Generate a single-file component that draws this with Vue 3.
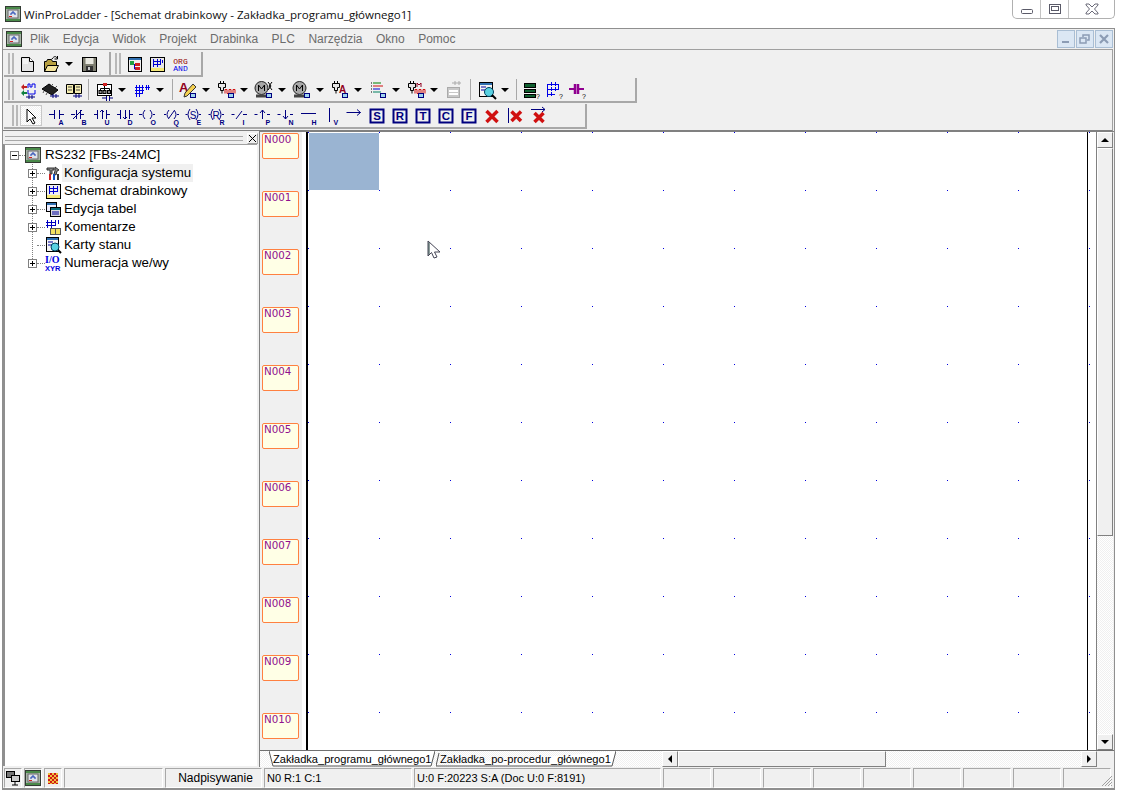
<template>
  <div class="window">
    <div class="titlebar">
      <svg class="title-icon" width="16" height="16" viewBox="0 0 16 16" v-html="plcIcon"></svg>
      <span class="title-text">WinProLadder - [Schemat drabinkowy - Zakładka_programu_głównego1]</span>
      <div class="caption-btns">
        <div class="cap-btn cap-min"><svg width="14" height="7" viewBox="0 0 14 7"><rect x="1.500" y="1.500" width="11" height="4" rx="1" fill="#fff" stroke="#5a5a68"/></svg></div>
        <div class="cap-btn cap-max"><svg width="14" height="12" viewBox="0 0 14 12"><rect x="1.500" y="1.500" width="11" height="9" fill="#fff" stroke="#5a5a68"/><rect x="3.500" y="3.500" width="7" height="4" fill="#fff" stroke="#5a5a68"/></svg></div>
        <div class="cap-btn cap-close"><svg width="14" height="12" viewBox="0 0 14 12"><path d="M1 1h3l3 3 3-3h3v1L9.500 6 13 10v1h-3L7 8l-3 3H1v-1l3.500-4L1 2z" fill="#fff" stroke="#6a6a78"/></svg></div>
      </div>
    </div>

    <div class="frame">
      <div class="menubar">
        <svg class="menu-icon" width="16" height="16" viewBox="0 0 16 16" v-html="plcIcon"></svg>
        <span v-for="m in menus" :key="m" class="menu-item">{{ m }}</span>
        <div class="mdi-btns">
          <div class="mdi-btn"><svg width="12" height="12" viewBox="0 0 12 12"><rect x="2" y="8" width="7" height="2" fill="#8c9cb4"/></svg></div>
          <div class="mdi-btn"><svg width="12" height="12" viewBox="0 0 12 12" fill="none" stroke="#8c9cb4" stroke-width="1.500"><rect x="1" y="5" width="6" height="5"/><path d="M4 4V2h6v5H8"/></svg></div>
          <div class="mdi-btn"><svg width="12" height="12" viewBox="0 0 12 12" stroke="#8c9cb4" stroke-width="2.200"><path d="M2 2l8 8M10 2l-8 8"/></svg></div>
        </div>
      </div>

      <div class="toolbars">
        <div class="tool-row">
          <div class="band band-file">
            <span class="grip"></span>
            <template v-for="(t, i) in fileTools" :key="i">
              <span v-if="t === 'drop'" class="drop drop-wide"></span>
              <svg v-else class="tool" width="23" height="22" viewBox="0 0 23 22" v-html="t"></svg>
            </template>
          </div>
          <div class="band band-view">
            <span class="grip"></span>
            <svg v-for="(t, i) in viewTools" :key="i" class="tool" width="23" height="22" viewBox="0 0 23 22" v-html="t"></svg>
          </div>
        </div>
        <div class="tool-row">
          <div class="band band-main">
            <span class="grip grip-main"></span>
            <template v-for="(t, i) in mainTools" :key="i">
              <span v-if="t === 'drop'" class="drop"></span>
              <span v-else-if="t.sep" class="sep" :style="{ width: t.sep + 'px' }"></span>
              <svg v-else class="tool" width="23" height="22" viewBox="0 0 23 22" v-html="t"></svg>
            </template>
          </div>
        </div>
        <div class="tool-row">
          <div class="band band-ladder">
            <span class="grip grip-ladder"></span>
            <div class="arrow-btn">
              <svg width="20" height="20" viewBox="0 0 20 20"><path d="M6 3v13l3-3 3 5 2-1-3-5h4z" fill="#fff" stroke="#000"/></svg>
            </div>
            <svg v-for="(t, i) in ladderTools" :key="i" class="tool" width="23" height="22" viewBox="0 0 23 22" v-html="t"></svg>
          </div>
        </div>
      </div>

      <div class="workspace">
        <div class="side-panel">
          <div class="side-head">
            <span class="side-grip"></span>
            <span class="side-close"><svg width="9" height="9" viewBox="0 0 9 9" stroke="#000"><path d="M1 1l7 7M8 1l-7 7"/></svg></span>
          </div>
          <div class="tree">
            <div class="tree-line"></div>
            <div class="tree-root">
              <span class="expander"><i class="h"></i></span>
              <span class="dots dots-root"></span>
              <svg class="tree-icon" width="16" height="16" viewBox="0 0 16 16" v-html="plcIcon"></svg>
              <span class="tree-label">RS232 [FBs-24MC]</span>
            </div>
            <div v-for="n in treeItems" :key="n.label" class="tree-row">
              <span v-if="n.plus" class="expander"><i class="h"></i><i class="v"></i></span>
              <span v-else class="expander-none"></span>
              <span class="dots"></span>
              <svg class="tree-icon" width="17" height="17" viewBox="0 0 17 17" v-html="n.icon"></svg>
              <span class="tree-label" :class="{ active: n.active }">{{ n.label }}</span>
            </div>
          </div>
        </div>

        <div class="editor">
          <div class="editor-main">
            <div class="gutter">
              <div v-for="r in rungs" :key="r" class="rung">{{ r }}</div>
            </div>
            <div class="canvas">
              <svg class="grid-dots" width="790" height="620">
                <rect x="1" y="1" width="70" height="57" fill="#9ab4d2"/>
                <template v-for="y in 11" :key="y">
                  <rect v-for="x in 12" :key="x" :x="(x - 1) * 71" :y="(y - 1) * 58" width="1" height="1" fill="#0000e0"/>
                </template>
              </svg>
              <svg class="cursor" width="15" height="21" viewBox="0 0 15 21"><path d="M1 1v15l3.500-3.500L7 18l3-1-2.500-5H13z" fill="#fff" stroke="#445"/><path d="M1.500 2v13l1-1V3z" fill="#1d3b38"/></svg>
            </div>
            <div class="vscroll">
              <div class="sb-btn"><i class="tri tri-up"></i></div>
              <div class="vthumb"></div>
              <div class="vtrack"></div>
              <div class="sb-btn"><i class="tri tri-down"></i></div>
            </div>
          </div>
          <div class="editor-foot">
            <div class="tabs">
              <div class="tab tab-one">
                <svg class="tab-shape" width="166" height="16" viewBox="0 0 166 16"><path d="M0 0l4 15h158l4-15" fill="#fff" stroke="#555"/></svg>
                <span>Zakładka_programu_głównego1</span>
              </div>
              <div class="tab tab-two">
                <svg class="tab-shape" width="180" height="16" viewBox="0 0 180 16"><path d="M0 15h176l4-15M0 15L3 2" fill="#fff" stroke="#555"/></svg>
                <span>Zakładka_po-procedur_głównego1</span>
              </div>
            </div>
            <div class="hscroll">
              <div class="sb-btn"><i class="tri tri-left"></i></div>
              <div class="hthumb"></div>
              <div class="htrack"></div>
              <div class="sb-btn"><i class="tri tri-right"></i></div>
            </div>
            <div class="corner"></div>
          </div>
        </div>
      </div>

      <div class="statusbar">
        <div class="st st-icon"><svg width="16" height="16" viewBox="0 0 16 16"><rect x="1.500" y="1.500" width="8" height="6" fill="#777" stroke="#000"/><rect x="6.500" y="5.500" width="8" height="6" fill="#ccc" stroke="#000"/><path d="M10 12v3M7 15h6" stroke="#000"/></svg></div>
        <div class="st st-icon"><svg width="16" height="16" viewBox="0 0 16 16" v-html="plcIcon"></svg></div>
        <div class="st st-icon"><span class="led"></span></div>
        <div class="st st-empty"></div>
        <div class="st st-mode">Nadpisywanie</div>
        <div class="st st-pos">N0 R:1 C:1</div>
        <div class="st st-mem">U:0 F:20223 S:A (Doc U:0 F:8191)</div>
        <div v-for="n in 9" :key="n" class="st st-blank"></div>
        <svg class="resize" width="12" height="12" viewBox="0 0 12 12" stroke="#a0a0a0"><path d="M11 1L1 11M11 4l-7 7M11 7l-4 4M11 10l-1 1"/></svg>
      </div>
    </div>
  </div>
</template>

<script setup>
const menus = ['Plik', 'Edycja', 'Widok', 'Projekt', 'Drabinka', 'PLC', 'Narzędzia', 'Okno', 'Pomoc']
const rungs = ['N000', 'N001', 'N002', 'N003', 'N004', 'N005', 'N006', 'N007', 'N008', 'N009', 'N010']

const plcIcon = `
  <rect x="0.500" y="0.500" width="15" height="15" fill="#a8b4a8" stroke="#333b33"/>
  <rect x="1" y="1" width="14" height="2" fill="#4a8a4a"/>
  <rect x="1" y="13" width="14" height="2" fill="#4a8a4a"/>
  <rect x="3" y="4" width="10" height="8" fill="#dfe3ea" stroke="#666"/>
  <path d="M5 8h2V6h2v2h2" fill="none" stroke="#1a3fb0"/>
  <rect x="4" y="10" width="3" height="1" fill="#d02020"/>`

const NAVY = '#00007f'
const BLUE = '#0000e8'
const marker = '<rect x="14.500" y="14.500" width="5" height="4" fill="#9fd4ee" stroke="#00007f"/>'
const joint = '<path d="M12 17h9M15 15v4M18 15v4" stroke="#00007f" fill="none"/>'
const label = (c, x = 14.5) => `<text x="${x}" y="20" font-family="Liberation Sans, sans-serif" font-size="7" font-weight="700" fill="${NAVY}">${c}</text>`
const lines = (d, extra = '') => `<path d="${d}" fill="none" stroke="${NAVY}" shape-rendering="crispEdges"/>${extra}`
const curved = (d, extra = '') => `<path d="${d}" fill="none" stroke="${NAVY}"/>${extra}`
const boxed = (c) => `<rect x="4.500" y="4.500" width="13" height="13" fill="none" stroke="${NAVY}" stroke-width="2"/><text x="11" y="15" text-anchor="middle" font-family="Liberation Sans, sans-serif" font-size="11.500" font-weight="700" fill="${NAVY}">${c}</text>`
const plug = '<path d="M4.500 4.500h7v4h-2v3h-3v-3h-2z" fill="#e6e6e6" stroke="#000"/><path d="M6.500 2v2M9.500 2v2M8 11.500v3" stroke="#000" fill="none"/>'
const wave = '<path d="M11 14.500v-4h2v4h2v-4h2v4h2v-4h2v4" stroke="#d01010" fill="none"/>'
const gauge = '<circle cx="9.500" cy="9" r="6.500" fill="#a8a8a8" stroke="#222"/><path d="M6.500 12V6l3 4 3-4v6" fill="none" stroke="#000"/><path d="M4 17h11" stroke="#444" stroke-width="3"/>'
const redX = '<path d="M5.500 6l11 11M16.500 6l-11 11" stroke="#d01010" stroke-width="3.500" fill="none"/>'

const fileTools = [
  '<path d="M5.500 4.500h8l4 4v10h-12z" fill="#e4e4e4" stroke="#000"/><path d="M13.500 4.500v4h4" fill="#fff" stroke="#000"/><path d="M7 6h5v5H7z" fill="#fff" opacity=".6"/>',
  '<path d="M5.500 18.500v-10h2l1-2h4l1 2h4v10z" fill="#b8a040" stroke="#000"/><path d="M5.500 18.500l3-6h11l-3 6z" fill="#f4e49c" stroke="#000"/><path d="M13 6c2-3 4-3 5-1M18.500 3v3h-3" fill="none" stroke="#000"/>',
  'drop',
  '<rect x="4.500" y="4.500" width="14" height="14" fill="#7e7e70" stroke="#000"/><rect x="7.500" y="5" width="8" height="6" fill="#e8e8e0"/><rect x="8" y="13" width="7" height="5" fill="#333"/><rect x="10" y="14" width="2" height="3" fill="#ccc"/>'
]

const viewTools = [
  '<rect x="5.500" y="4.500" width="13" height="14" fill="#f0f0f0" stroke="#000"/><rect x="6" y="5" width="12" height="2" fill="#2f6fb0"/><rect x="7" y="8" width="4" height="4" fill="#20a040"/><rect x="12" y="10" width="5" height="3" fill="#d02020"/><rect x="12" y="14" width="5" height="3" fill="#d02020"/><path d="M11.500 11v5h1" stroke="#0000c0" fill="none"/>',
  '<rect x="4.500" y="4.500" width="14" height="14" fill="#e8e8e8" stroke="#000"/><rect x="5" y="15" width="13" height="3" fill="#f4e878"/><path d="M7.500 6v8M11.500 6v8M14.500 6v5M7 8h8M7 11h8M16.500 7v3" stroke="#0000d0" fill="none" shape-rendering="crispEdges"/>',
  `<text x="11.500" y="10.500" text-anchor="middle" font-family="Liberation Mono, monospace" font-size="8" fill="#900000">ORG</text><text x="11.500" y="18" text-anchor="middle" font-family="Liberation Mono, monospace" font-size="8" fill="${BLUE}">AND</text>`
]

const mainTools = [
  `<path d="M6 8l3-3v2h3v2H9v2z" fill="#c02020"/><path d="M6 14l3-3v2h3v2H9v2z" fill="#108040"/><path d="M13 9V5h2v3h2V5h3v4M13 11v4h7v-4" stroke="${BLUE}" fill="none"/><path d="M11 18h9M14 16v4M17 16v4" stroke="${NAVY}" fill="none"/>`,
  `<path d="M4 10l7-5 9 6-6 5z" fill="#222" stroke="#000"/><path d="M6 12l-1 2M9 14l-1 2M13 7l2-2M17 9l2-2" stroke="#555"/>${joint}`,
  `<path d="M5.500 5.500h7v9h-7zM13.500 5.500h7v9h-7z" fill="#f6eeb0" stroke="#000"/><path d="M7 8h4M7 11h4M15 8h4M15 11h4" stroke="#444"/>${joint}`,
  { sep: 8 },
  `<rect x="5.500" y="5.500" width="14" height="11" fill="#fff" stroke="#000"/><rect x="11" y="4" width="4" height="3" fill="#d02020"/><path d="M12.500 7v2M8.500 9.500h9M8.500 9.500v2M12.500 9.500v2M17.500 9.500v2" stroke="#000" fill="none"/><rect x="7" y="11.500" width="3" height="3" fill="#888" stroke="#000"/><rect x="11" y="11.500" width="3" height="3" fill="#888" stroke="#000"/><rect x="15.500" y="11.500" width="3" height="3" fill="#888" stroke="#000"/><path d="M10 19h4M17 19h4M14.500 17v5M17.500 17v5" stroke="${NAVY}" fill="none"/>`,
  'drop',
  `<path d="M6.500 6v12M9.500 6v12M12.500 6v9M16.500 6v5M18.500 6v5M5 8h9M5 11h9M5 14h8M15 8h5" stroke="${BLUE}" fill="none" shape-rendering="crispEdges"/>`,
  'drop',
  { sep: 8 },
  `<text x="3" y="13" font-family="Liberation Sans, sans-serif" font-size="13" font-weight="700" fill="#900020">A</text><path d="M8 18l1-4 8-9 3 3-9 9z" fill="#f4d050" stroke="#333"/>${marker}`,
  'drop',
  `${plug}${wave}${marker}`,
  'drop',
  `${gauge}<path d="M16 3l3 4-3 4M20 3l-3 4 3 4" stroke="#000" fill="none"/>${marker}`,
  'drop',
  `${gauge}${marker}`,
  'drop',
  `${plug}<text x="11" y="14" font-family="Liberation Sans, sans-serif" font-size="10" font-weight="700" fill="#900020">A</text>${marker}`,
  'drop',
  `<path d="M5 4h1M5 7h1M5 10h1M5 13h1" stroke="#000"/><path d="M7 4h8" stroke="#008000"/><path d="M7 7h10" stroke="#d01010"/><path d="M7 10h7" stroke="#0000d0"/><path d="M7 13h8" stroke="#008060"/>${marker}`,
  'drop',
  `${plug}${wave}<path d="M13 8V4l2 2 2-2v4" stroke="#900020" fill="none"/>${marker}`,
  'drop',
  '<rect x="5.500" y="8.500" width="12" height="10" fill="#c8c8c8" stroke="#aaa"/><path d="M7 12h9M7 15h9" stroke="#fff" stroke-width="2"/><path d="M10 4h9M13 2v4M17 2v4" stroke="#aaa" fill="none"/>',
  { sep: 10 },
  `<rect x="4.500" y="3.500" width="13" height="14" fill="#f4f4f4" stroke="#000"/><rect x="5" y="4" width="12" height="2" fill="#2f6fb0"/><path d="M6 8h5M6 11h4" stroke="#0000a0"/><circle cx="14" cy="13" r="4.500" fill="#58d0e0" stroke="#004060"/><path d="M17 16l4 4" stroke="#000" stroke-width="2"/>`,
  'drop',
  { sep: 6 },
  `<rect x="5.500" y="4.500" width="11" height="4" fill="#0f5f2f" stroke="#000"/><rect x="5.500" y="10.500" width="11" height="3" fill="#0f5f2f" stroke="#000"/><rect x="5.500" y="15.500" width="11" height="3" fill="#0f5f2f" stroke="#000"/><text x="17" y="20" font-family="Liberation Sans, sans-serif" font-size="7" fill="#000">?</text>`,
  `<path d="M5.500 5v13M5.500 5h11M5.500 10h11M5.500 15h7M16.500 5v5M9.500 3v4M13.500 3v4M9.500 8v4M13.500 8v4M9.500 13v4" stroke="${BLUE}" fill="none" shape-rendering="crispEdges"/><text x="17" y="20" font-family="Liberation Sans, sans-serif" font-size="7" fill="#000">?</text>`,
  '<path d="M4 10h5M14 10h5" stroke="#900090" stroke-width="2"/><path d="M10 5v10M13 5v10" stroke="#900090" stroke-width="2.500"/><text x="17" y="20" font-family="Liberation Sans, sans-serif" font-size="7" fill="#000">?</text>'
]

const ladderTools = [
  lines('M5 9.500h5M10 5v9M15 5v9M15 9.500h5', label('A')),
  curved('M4 9.500h4M14 9.500h3M6 14l9-9M9.500 5v9M13.500 5v9', label('B')),
  lines('M4 9.500h3M7.500 5v9M16.500 5v9M16.500 9.500h3M12 5v9', curved('M10 7l2-2 2 2', label('U'))),
  lines('M4 9.500h3M7.500 5v9M16.500 5v9M16.500 9.500h3M12 5v9', curved('M10 12l2 2 2-2', label('D'))),
  curved('M3 9.500h3M9 5Q5 9.500 9 14M14 5Q18 9.500 14 14M17 9.500h2', label('O')),
  curved('M5 9.500h2M10 5Q6 9.500 10 14M15 5Q19 9.500 15 14M18 9.500h2M10 13l5-7', label('Q')),
  curved('M3.500 9.500h2M8 4Q4 9.500 8 15M14 4Q18 9.500 14 15M17 9.500h2', `<text x="11" y="13.500" text-anchor="middle" font-family="Liberation Sans, sans-serif" font-size="10" fill="${NAVY}">S</text>${label('E')}`),
  curved('M3.500 9.500h2M8 4Q4 9.500 8 15M14 4Q18 9.500 14 15M17 9.500h2', `<text x="11" y="13.500" text-anchor="middle" font-family="Liberation Sans, sans-serif" font-size="10" fill="${NAVY}">R</text>${label('R')}`),
  curved('M3.500 9.500h3M8 14l6-8M15 9.500h4', label('I')),
  curved('M3.500 9.500h3M11.500 14V5M9 8l2.500-3 2.500 3M16 9.500h3', label('P')),
  curved('M3.500 9.500h3M11.500 5v9M9 11l2.500 3 2.500-3M16 9.500h3', label('N')),
  lines('M3.500 8.500h15', label('H')),
  lines('M9.500 3v14', label('V', 13.5)),
  curved('M3.500 7.500h14M14 4.500l3.500 3-3.500 3'),
  boxed('S'), boxed('R'), boxed('T'), boxed('C'), boxed('F'),
  redX,
  `<path d="M4.500 3v15" stroke="${NAVY}"/><path d="M7.500 6.500l9.500 9.500M17 6.500L7.500 16" stroke="#d01010" stroke-width="3.500" fill="none"/>`,
  `<path d="M4 4.500h14M15 2l3 2.500-3 2.500" stroke="${NAVY}" fill="none"/><path d="M7.500 8l9 9M16.500 8l-9 9" stroke="#d01010" stroke-width="3.500" fill="none"/>`
]

const treeItems = [
  { label: 'Konfiguracja systemu', plus: true, active: true, icon: '<path d="M2 3h7v2H7v4H5V5H2zM10 2l4 3-2 1-1 4-2-1 1-3z" fill="#888" stroke="#333"/><path d="M5 9v6" stroke="#d02020" stroke-width="2"/><path d="M9 9v6" stroke="#1050c0" stroke-width="2"/><path d="M13 9v6" stroke="#333" stroke-width="2"/>' },
  { label: 'Schemat drabinkowy', plus: true, icon: '<rect x="1.500" y="1.500" width="14" height="14" fill="#eee" stroke="#000"/><rect x="2" y="12" width="13" height="3" fill="#f4e878"/><path d="M4.500 3v8M8.500 3v8M12.500 3v5M4 5.500h9M4 8.500h9" stroke="#0000d0" fill="none"/>' },
  { label: 'Edycja tabel', plus: true, icon: '<rect x="1.500" y="1.500" width="10" height="9" fill="#eef" stroke="#000"/><rect x="2" y="2" width="9" height="2" fill="#2f6fb0"/><rect x="5.500" y="6.500" width="10" height="9" fill="#ddd" stroke="#000"/><rect x="6" y="7" width="9" height="2" fill="#0a6a7a"/><path d="M7 11h7M7 13h7" stroke="#0000a0"/>' },
  { label: 'Komentarze', plus: true, icon: '<path d="M2.500 1v8M6.500 1v8M10.500 1v5M1 3.500h10M1 6.500h10M13.500 1v4" stroke="#0000c0" fill="none"/><rect x="5.500" y="9.500" width="5" height="6" fill="#f4e060" stroke="#555"/><rect x="10.500" y="9.500" width="5" height="6" fill="#f4e060" stroke="#555"/>' },
  { label: 'Karty stanu', plus: false, icon: '<rect x="1.500" y="0.500" width="12" height="14" fill="#f4f4f4" stroke="#000"/><rect x="2" y="1" width="11" height="2" fill="#2f6fb0"/><path d="M3 5h5M3 8h4" stroke="#0000a0"/><circle cx="10" cy="10" r="4" fill="#58d0e0" stroke="#004060"/><path d="M13 13l3 3" stroke="#000" stroke-width="2"/>' },
  { label: 'Numeracja we/wy', plus: true, icon: `<text x="0" y="8" font-family="Liberation Serif, serif" font-size="10" font-weight="700" fill="#0000e0">I/O</text><text x="0" y="16" font-family="Liberation Sans, sans-serif" font-size="7.500" font-weight="700" fill="#0000e0">XYR</text>` }
]
</script>

<style>
html,
body {
  margin: 0;
  background: #fff;
  overflow: hidden;
}
</style>

<style scoped>
.window {
  width: 1121px;
  height: 793px;
  background: #fff;
  font-family: "Liberation Sans", Arial, sans-serif;
  font-size: 12px;
  color: #000;
  overflow: hidden;
}

.titlebar {
  height: 28px;
  display: flex;
  align-items: center;
  padding-left: 5px;
  position: relative;
}

.title-icon {
  margin-right: 3px;
}

.title-text {
  font-family: "Open Sans", sans-serif;
  font-size: 11.55px;
  color: #111;
}

.caption-btns {
  position: absolute;
  left: 1012px;
  top: 0;
  width: 103px;
  height: 19px;
  display: flex;
  box-sizing: border-box;
  border: 1px solid #b0b0b0;
  border-top: none;
  border-radius: 0 0 5px 5px;
}

.cap-btn {
  display: flex;
  align-items: center;
  justify-content: center;
  border-left: 1px solid #c4c4c4;
}

.cap-min {
  width: 27px;
  border-left: none;
  padding-top: 4px;
  box-sizing: border-box;
}

.cap-max {
  width: 27px;
}

.cap-close {
  flex: 1;
}

.frame {
  height: 762px;
  margin: 0 6px 0 2px;
  box-sizing: border-box;
  border: 1px solid #8f8f8f;
  border-bottom-width: 2px;
  background: #f0f0f0;
  display: flex;
  flex-direction: column;
}

.menubar {
  height: 20px;
  flex: none;
  box-sizing: border-box;
  display: flex;
  align-items: center;
  padding: 0 0 1px 3px;
  font-size: 12px;
  color: #6c6c6c;
}

.menu-icon {
  margin-right: 8px;
}

.menu-item {
  margin-right: 13.5px;
}

.mdi-btns {
  margin-left: auto;
  margin-right: 1px;
  display: flex;
  gap: 1px;
}

.mdi-btn {
  width: 18px;
  height: 18px;
  box-sizing: border-box;
  border: 1px solid #a9bed4;
  background: #dbe7f4;
  display: flex;
  align-items: center;
  justify-content: center;
}

.toolbars {
  flex: none;
  height: 82px;
  margin-right: 1px;
  padding: 2px 0 0 1px;
  box-sizing: border-box;
  border: 1px solid #a0a0a0;
  border-left: none;
  border-bottom-color: #808080;
}

.tool-row {
  height: 26px;
  display: flex;
}

.band {
  height: 25px;
  display: flex;
  align-items: center;
  box-sizing: border-box;
  border-right: 2px solid #a8a8a8;
  border-bottom: 2px solid #a8a8a8;
  flex: none;
}

.band-file {
  width: 107px;
}

.band-view {
  width: 92px;
}

.band-main {
  width: 633px;
}

.band-ladder {
  width: 583px;
}

.grip {
  width: 6px;
  height: 21px;
  margin: 0 1.5px 0 4px;
  border-left: 2px solid #b8b8b8;
  border-right: 2px solid #b8b8b8;
  box-sizing: border-box;
  flex: none;
}

.grip-main {
  margin-right: 0.5px;
}

.grip-ladder {
  margin: 0 2px 0 8px;
}

.tool {
  flex: none;
}

.drop {
  width: 15px;
  height: 22px;
  flex: none;
  position: relative;
}

.drop-wide {
  width: 16px;
}

.drop::after {
  content: "";
  position: absolute;
  left: 3px;
  top: 9px;
  border-left: 4px solid transparent;
  border-right: 4px solid transparent;
  border-top: 4px solid #000;
}

.sep {
  height: 21px;
  flex: none;
  position: relative;
}

.sep::after {
  content: "";
  position: absolute;
  left: 50%;
  top: 0;
  bottom: 0;
  width: 1px;
  background: #a8a8a8;
}

.arrow-btn {
  width: 22px;
  height: 21px;
  margin-right: 1.5px;
  box-sizing: border-box;
  border: 1px solid #c8c8c8;
  background: repeating-conic-gradient(#f0f0f0 0 25%, #fff 0 50%) 0 0 / 2px 2px;
  display: flex;
  align-items: center;
  justify-content: center;
  flex: none;
}

.workspace {
  flex: 1;
  min-height: 0;
  display: flex;
}

.side-panel {
  width: 256px;
  flex: none;
  display: flex;
  flex-direction: column;
  padding-top: 1px;
}

.side-head {
  height: 12px;
  flex: none;
  display: flex;
  align-items: center;
  gap: 4px;
  padding: 0 1px 0 2px;
}

.side-grip {
  flex: 1;
  height: 3px;
  border-top: 1px solid #a8a8a8;
  border-bottom: 1px solid #a8a8a8;
}

.side-close {
  width: 11px;
  height: 11px;
  box-sizing: border-box;
  border: 1px solid #a0a0a0;
  border-left-color: #fff;
  border-top-color: #fff;
  display: flex;
  align-items: center;
  justify-content: center;
}

.tree {
  flex: 1;
  background: #fff;
  border-left: 2px solid #8f8f8f;
  border-top: 1px solid #a0a0a0;
  position: relative;
  padding-top: 1px;
  margin: 0 2px 1px 0;
  font-size: 13.3px;
}

.tree-line {
  position: absolute;
  left: 27px;
  top: 16px;
  height: 102px;
  border-left: 1px dotted #808080;
}

.tree-root,
.tree-row {
  height: 18px;
  display: flex;
  align-items: center;
  position: relative;
}

.tree-root {
  padding-left: 5px;
}

.tree-row {
  padding-left: 23px;
}

.expander {
  width: 9px;
  height: 9px;
  box-sizing: border-box;
  border: 1px solid #808080;
  background: #fff;
  position: relative;
  flex: none;
}

.expander .h {
  position: absolute;
  left: 1px;
  top: 3px;
  width: 5px;
  height: 1px;
  background: #000;
}

.expander .v {
  position: absolute;
  left: 3px;
  top: 1px;
  width: 1px;
  height: 5px;
  background: #000;
}

.expander-none {
  width: 9px;
  flex: none;
}

.dots {
  width: 8px;
  flex: none;
  border-top: 1px dotted #808080;
}

.dots-root {
  width: 6px;
}

.tree-icon {
  flex: none;
}

.tree-label {
  padding: 0 2px;
  height: 18px;
  line-height: 18px;
  white-space: nowrap;
}

.tree-root .tree-label {
  margin-left: 2px;
}

.tree-label.active {
  background: #f0f0f0;
}

.editor {
  flex: 1;
  min-width: 0;
  display: flex;
  flex-direction: column;
  border-left: 1px solid #808080;
  border-top: 1px solid #808080;
}

.editor-main {
  flex: 1;
  min-height: 0;
  display: flex;
}

.gutter {
  width: 42px;
  flex: none;
  padding: 1px 0 0 2px;
  box-sizing: border-box;
  display: flex;
  flex-direction: column;
  gap: 32px;
  overflow: hidden;
}

.rung {
  width: 37px;
  height: 26px;
  flex: none;
  box-sizing: border-box;
  border: 1px solid #ff8040;
  border-radius: 2px;
  background: #ffffe6;
  font-family: "DejaVu Sans", sans-serif;
  font-size: 10.3px;
  line-height: 10px;
  color: #90108f;
  padding-left: 1px;
}

.canvas {
  flex: 1;
  min-width: 0;
  background: #fff;
  position: relative;
  border-left: 2px solid #000;
  margin-left: 4px;
}

.canvas::before {
  content: "";
  position: absolute;
  left: -6px;
  top: 0;
  bottom: 0;
  width: 4px;
  background: #fff;
}

.canvas::after {
  content: "";
  position: absolute;
  right: 8px;
  top: 0;
  bottom: 0;
  width: 1px;
  background: #000;
}

.grid-dots {
  position: absolute;
  left: 0;
  top: 0;
}

.cursor {
  position: absolute;
  left: 119px;
  top: 108px;
}

.vscroll {
  width: 16px;
  flex: none;
  display: flex;
  flex-direction: column;
  border-left: 1px solid #808080;
  margin-right: 1px;
}

.sb-btn {
  width: 16px;
  height: 16px;
  flex: none;
  box-sizing: border-box;
  background: #f0f0f0;
  border: 1px solid #808080;
  border-left-color: #fff;
  border-top-color: #fff;
  display: flex;
  align-items: center;
  justify-content: center;
}

.vthumb {
  height: 388px;
  flex: none;
  box-sizing: border-box;
  background: #f0f0f0;
  border: 1px solid #808080;
  border-left-color: #fff;
  border-top-color: #fff;
}

.vtrack,
.htrack {
  flex: 1;
  background: repeating-conic-gradient(#f0f0f0 0 25%, #fff 0 50%) 0 0 / 2px 2px;
}

.tri {
  width: 0;
  height: 0;
  display: block;
}

.tri-up {
  border-left: 4px solid transparent;
  border-right: 4px solid transparent;
  border-bottom: 4px solid #000;
}

.tri-down {
  border-left: 4px solid transparent;
  border-right: 4px solid transparent;
  border-top: 4px solid #000;
}

.tri-left {
  border-top: 4px solid transparent;
  border-bottom: 4px solid transparent;
  border-right: 4px solid #000;
}

.tri-right {
  border-top: 4px solid transparent;
  border-bottom: 4px solid transparent;
  border-left: 4px solid #000;
}

.editor-foot {
  height: 17px;
  flex: none;
  display: flex;
  border-top: 1px solid #707070;
  box-sizing: border-box;
  background: repeating-conic-gradient(#f0f0f0 0 25%, #fff 0 50%) 0 0 / 2px 2px;
}

.tabs {
  width: 402px;
  flex: none;
  display: flex;
  padding-left: 9px;
  box-sizing: border-box;
  font-size: 11.1px;
}

.tab {
  position: relative;
  height: 16px;
  line-height: 17px;
  flex: none;
}

.tab-one {
  width: 167px;
}

.tab-two {
  width: 180px;
}

.tab-shape {
  position: absolute;
  left: 0;
  top: 0;
}

.tab span {
  position: relative;
  white-space: nowrap;
  padding-left: 4px;
}

.hscroll {
  flex: 1;
  min-width: 0;
  display: flex;
}

.hthumb {
  width: 208px;
  flex: none;
  box-sizing: border-box;
  background: #f0f0f0;
  border: 1px solid #808080;
  border-left-color: #fff;
  border-top-color: #fff;
}

.corner {
  width: 17px;
  flex: none;
  background: #f0f0f0;
}

.statusbar {
  height: 21px;
  flex: none;
  display: flex;
  align-items: stretch;
  gap: 2px;
  padding: 1px 0 0 1px;
  box-sizing: border-box;
  position: relative;
}

.st {
  box-sizing: border-box;
  border-left: 1px solid #a8a8a8;
  border-top: 1px solid #a8a8a8;
  border-right: 1px solid #fff;
  border-bottom: 1px solid #fff;
  display: flex;
  align-items: center;
  padding-left: 2px;
  white-space: nowrap;
  overflow: hidden;
  flex: none;
}

.st-icon {
  width: 18px;
  padding-left: 0;
  justify-content: center;
}

.led {
  width: 10px;
  height: 11px;
  background: repeating-conic-gradient(#d01818 0 25%, #f0c040 0 50%) 0 0 / 4px 4px;
}

.st-empty {
  width: 99px;
}

.st-mode {
  width: 97px;
  justify-content: center;
  padding-left: 4px;
}

.st-pos {
  width: 148px;
  font-size: 11px;
}

.st-mem {
  width: 247px;
  font-size: 11px;
}

.st-blank {
  width: 48px;
}

.resize {
  position: absolute;
  right: 1px;
  bottom: 1px;
}
</style>
